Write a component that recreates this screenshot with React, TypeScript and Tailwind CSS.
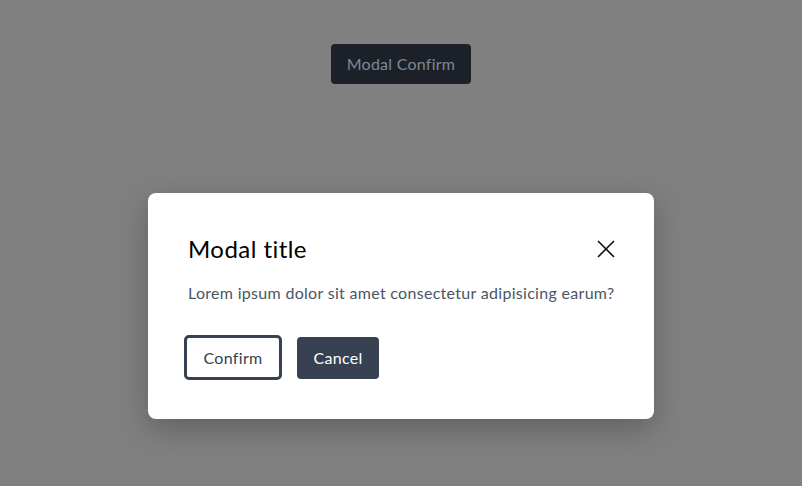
export default function App() {
  return (
    <div
      className="min-h-[486px] w-full bg-[#808080] flex flex-col items-center pt-[44px]"
      style={{ fontFamily: 'Lato, "Noto Sans", sans-serif' }}
    >
      <button className="w-[140px] h-[40px] rounded-[4px] bg-[#1c2129] text-[#7f8893] text-[16px] tracking-[0.25px] flex items-center justify-center">
        Modal Confirm
      </button>
      <div className="mt-[109px] w-[506px] rounded-[8px] bg-white shadow-[0_10px_30px_rgba(0,0,0,0.25)] px-[40px] pt-[40px] pb-[39px]">
        <div className="flex items-center justify-between h-[32px]">
          <h2 className="text-[24px] leading-[32px] text-black tracking-[0.45px]">Modal title</h2>
          <svg width="18" height="18" viewBox="0 0 18 18" className="mr-[-1px]">
            <path d="M1 1 L17 17 M17 1 L1 17" stroke="#111" strokeWidth="1.6" fill="none" />
          </svg>
        </div>
        <p className="mt-[16px] text-[16px] leading-[24px] text-[#4b5563] whitespace-nowrap tracking-[0.3px]">
          Lorem ipsum dolor sit amet consectetur adipisicing earum?
        </p>
        <div className="mt-[30px] flex items-center gap-[15px] ml-[-4px]">
          <button className="w-[98px] h-[45px] rounded-[5px] bg-white border-[3px] border-[#374151] text-[16px] text-[#374151] tracking-[0.3px] flex items-center justify-center">
            Confirm
          </button>
          <button className="w-[82px] h-[42px] rounded-[4px] bg-[#374151] text-[16px] text-white tracking-[0.3px] flex items-center justify-center">
            Cancel
          </button>
        </div>
      </div>
    </div>
  );
}
